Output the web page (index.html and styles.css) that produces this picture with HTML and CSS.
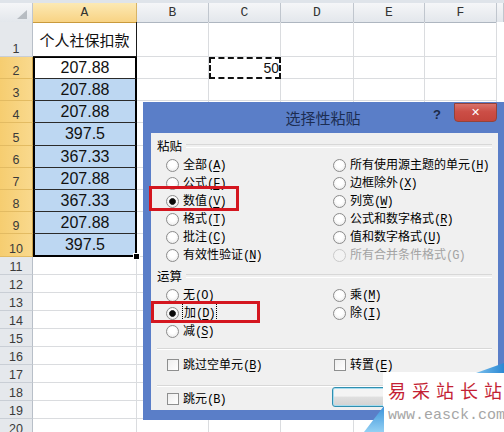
FILE: index.html
```html
<!DOCTYPE html>
<html lang="zh-CN">
<head>
<meta charset="utf-8">
<title>选择性粘贴</title>
<link rel="stylesheet" href="styles.css">
</head>
<body>
<div class="screen">
  <div class="sheet">
    <div class="topstrip"></div>
    <div class="row hdr">
      <div class="corner"><span class="tri"></span></div>
      <div class="ch sel">A</div>
      <div class="ch">B</div>
      <div class="ch">C</div>
      <div class="ch">D</div>
      <div class="ch">E</div>
      <div class="ch">F</div>
      <div class="ch"></div>
    </div>
    <div class="row h35">
      <div class="rh">1</div>
      <div class="a1">个人社保扣款</div>
      <div class="c"></div><div class="c"></div><div class="c"></div><div class="c"></div><div class="c"></div>
      <div class="e"></div>
    </div>
    <div class="row h22">
      <div class="rh sel">2</div>
      <div class="v first">207.88</div>
      <div class="c"></div>
      <div class="ants">50</div>
      <div class="c"></div><div class="c"></div><div class="c"></div>
      <div class="e"></div>
    </div>
    <div class="row h22">
      <div class="rh sel">3</div>
      <div class="v">207.88</div>
      <div class="c"></div><div class="c"></div><div class="c"></div><div class="c"></div><div class="c"></div>
      <div class="e"></div>
    </div>
    <div class="row h22">
      <div class="rh sel">4</div>
      <div class="v">207.88</div>
      <div class="c"></div><div class="c"></div><div class="c"></div><div class="c"></div><div class="c"></div>
      <div class="e"></div>
    </div>
    <div class="row h23">
      <div class="rh sel">5</div>
      <div class="v">397.5</div>
      <div class="c"></div><div class="c"></div><div class="c"></div><div class="c"></div><div class="c"></div>
      <div class="e"></div>
    </div>
    <div class="row h22">
      <div class="rh sel">6</div>
      <div class="v">367.33</div>
      <div class="c"></div><div class="c"></div><div class="c"></div><div class="c"></div><div class="c"></div>
      <div class="e"></div>
    </div>
    <div class="row h22">
      <div class="rh sel">7</div>
      <div class="v">207.88</div>
      <div class="c"></div><div class="c"></div><div class="c"></div><div class="c"></div><div class="c"></div>
      <div class="e"></div>
    </div>
    <div class="row h22">
      <div class="rh sel">8</div>
      <div class="v">367.33</div>
      <div class="c"></div><div class="c"></div><div class="c"></div><div class="c"></div><div class="c"></div>
      <div class="e"></div>
    </div>
    <div class="row h22">
      <div class="rh sel">9</div>
      <div class="v">207.88</div>
      <div class="c"></div><div class="c"></div><div class="c"></div><div class="c"></div><div class="c"></div>
      <div class="e"></div>
    </div>
    <div class="row h23">
      <div class="rh sel">10</div>
      <div class="v last">397.5<span class="handle"></span></div>
      <div class="c"></div><div class="c"></div><div class="c"></div><div class="c"></div><div class="c"></div>
      <div class="e"></div>
    </div>
    <div class="row h18"><div class="rh">11</div><div class="c"></div><div class="c"></div><div class="c"></div><div class="c"></div><div class="c"></div><div class="c"></div><div class="e"></div></div>
    <div class="row h18"><div class="rh">12</div><div class="c"></div><div class="c"></div><div class="c"></div><div class="c"></div><div class="c"></div><div class="c"></div><div class="e"></div></div>
    <div class="row h18"><div class="rh">13</div><div class="c"></div><div class="c"></div><div class="c"></div><div class="c"></div><div class="c"></div><div class="c"></div><div class="e"></div></div>
    <div class="row h18"><div class="rh">14</div><div class="c"></div><div class="c"></div><div class="c"></div><div class="c"></div><div class="c"></div><div class="c"></div><div class="e"></div></div>
    <div class="row h18"><div class="rh">15</div><div class="c"></div><div class="c"></div><div class="c"></div><div class="c"></div><div class="c"></div><div class="c"></div><div class="e"></div></div>
    <div class="row h18"><div class="rh">16</div><div class="c"></div><div class="c"></div><div class="c"></div><div class="c"></div><div class="c"></div><div class="c"></div><div class="e"></div></div>
    <div class="row h18"><div class="rh">17</div><div class="c"></div><div class="c"></div><div class="c"></div><div class="c"></div><div class="c"></div><div class="c"></div><div class="e"></div></div>
    <div class="row h18"><div class="rh">18</div><div class="c"></div><div class="c"></div><div class="c"></div><div class="c"></div><div class="c"></div><div class="c"></div><div class="e"></div></div>
    <div class="row h18"><div class="rh">19</div><div class="c"></div><div class="c"></div><div class="c"></div><div class="c"></div><div class="c"></div><div class="c"></div><div class="e"></div></div>
    <div class="row h18"><div class="rh">20</div><div class="c"></div><div class="c"></div><div class="c"></div><div class="c"></div><div class="c"></div><div class="c"></div><div class="e"></div></div>
  </div>

  <div class="dialog">
    <div class="titlebar">
      <div></div>
      <div class="dtitle">选择性粘贴</div>
      <div class="tbtns"><span class="help">?</span><span class="close">✕</span></div>
    </div>
    <div class="dbody">
      <div class="group"><span>粘贴</span></div>
      <div class="opts">
        <div class="opt"><span class="radio"></span><span>全部<span class="k">(<u>A</u>)</span></span></div>
        <div class="opt"><span class="radio"></span><span>所有使用源主题的单元<span class="k">(<u>H</u>)</span></span></div>
        <div class="opt"><span class="radio"></span><span>公式<span class="k">(<u>F</u>)</span></span></div>
        <div class="opt"><span class="radio"></span><span>边框除外<span class="k">(<u>X</u>)</span></span></div>
        <div class="opt"><span class="radio on"></span><span>数值<span class="k">(<u>V</u>)</span></span></div>
        <div class="opt"><span class="radio"></span><span>列宽<span class="k">(<u>W</u>)</span></span></div>
        <div class="opt"><span class="radio"></span><span>格式<span class="k">(<u>T</u>)</span></span></div>
        <div class="opt"><span class="radio"></span><span>公式和数字格式<span class="k">(<u>R</u>)</span></span></div>
        <div class="opt"><span class="radio"></span><span>批注<span class="k">(<u>C</u>)</span></span></div>
        <div class="opt"><span class="radio"></span><span>值和数字格式<span class="k">(<u>U</u>)</span></span></div>
        <div class="opt"><span class="radio"></span><span>有效性验证<span class="k">(<u>N</u>)</span></span></div>
        <div class="opt dis"><span class="radio off"></span><span>所有合并条件格式<span class="k">(G)</span></span></div>
      </div>
      <div class="group g2"><span>运算</span></div>
      <div class="opts">
        <div class="opt"><span class="radio"></span><span>无<span class="k">(<u>O</u>)</span></span></div>
        <div class="opt"><span class="radio"></span><span>乘<span class="k">(<u>M</u>)</span></span></div>
        <div class="opt"><span class="radio on"></span><span class="focus">加<span class="k">(<u>D</u>)</span></span></div>
        <div class="opt"><span class="radio"></span><span>除<span class="k">(<u>I</u>)</span></span></div>
        <div class="opt"><span class="radio"></span><span>减<span class="k">(<u>S</u>)</span></span></div>
        <div class="opt"></div>
      </div>
      <div class="sep"></div>
      <div class="opts checks">
        <div class="opt"><span class="check"></span><span>跳过空单元<span class="k">(<u>B</u>)</span></span></div>
        <div class="opt"><span class="check"></span><span>转置<span class="k">(<u>E</u>)</span></span></div>
      </div>
      <div class="sep sep2"></div>
      <div class="opts lastrow">
        <div class="opt"><span class="check"></span><span>跳元<span class="k">(B)</span></span></div>
        <div class="btnwrap"><span class="btn"></span></div>
      </div>
    </div>
  </div>

  <div class="mark mark1"></div>
  <div class="mark mark2"></div>

  <div class="wm">
    <div class="wm-paper">
      <div class="wm-cn">易采站长站</div>
      <div class="wm-url">www.easck.com</div>
    </div>
  </div>
</div>
</body>
</html>
```

FILE: styles.css
```css
* { box-sizing: border-box; margin: 0; padding: 0; }
html, body { width: 504px; height: 432px; overflow: hidden; background: #fff; }
body { font-family: "Noto Sans CJK SC", "Liberation Sans", sans-serif; text-autospace: no-autospace; }
.screen { position: relative; width: 504px; height: 432px; overflow: hidden; }

/* ---------- sheet ---------- */
.topstrip { height: 3px; background: #dfe4ea; }
.row { display: grid; grid-template-columns: 33px 104px 72px 72px 73px 71px 72px 7px; }
.hdr { height: 19px; }
.h35 { height: 35px; }
.h22 { height: 22px; }
.h23 { height: 23px; }
.h18 { height: 18px; }

.corner, .ch {
  background: linear-gradient(#f5f6f8, #e3e7ec);
  border-right: 1px solid #c0c6ce;
  border-bottom: 1px solid #aeb6c0;
}
.corner { display: flex; align-items: flex-end; justify-content: flex-end; padding: 0 5px 3px 0; }
.tri { width: 10px; height: 9px; background: #b7bcc2; clip-path: polygon(100% 0, 100% 100%, 0 100%); }
.ch {
  font-family: "Liberation Mono", monospace;
  font-size: 13px;
  color: #333;
  text-align: center;
  line-height: 19px;
}
.ch.sel { background: linear-gradient(#fce9b4, #f8d384); border-right-color: #d7b466; border-bottom-color: #c99a3c; }

.rh {
  background: #e5e8ec;
  border-right: 1px solid #b8bfc8;
  border-bottom: 1px solid #c9ced5;
  font-family: "Liberation Sans", sans-serif;
  font-size: 12.5px;
  line-height: 14px;
  color: #3a3a3a;
  display: flex;
  align-items: flex-end;
  justify-content: center;
}
.rh.sel { background: linear-gradient(90deg, #f6cd70, #f9d98d); border-right-color: #c9a04a; border-bottom-color: #e3bb62; }

.c { border-right: 1px solid #dadcdf; border-bottom: 1px solid #dadcdf; }
.e { background: #fff; }

.a1 {
  border-right: 1px solid #1a1a1a;
  border-bottom: 1px solid #1a1a1a;
  font-size: 15px;
  color: #111;
  display: flex;
  align-items: center;
  justify-content: center;
}
.v {
  background: #bdd7f2;
  border-left: 2px solid #000;
  border-right: 2px solid #000;
  border-bottom: 1px solid #2a2a2a;
  font-family: "Liberation Sans", sans-serif;
  font-size: 16px;
  color: #111;
  display: flex;
  align-items: center;
  justify-content: center;
}
.v.first { background: #fff; border-top: 1px solid #000; }
.v.last { border-bottom: 2px solid #000; position: relative; }
.handle {
  position: absolute;
  right: -5px;
  bottom: -5px;
  width: 7px;
  height: 7px;
  background: #000;
  border: 1px solid #fff;
  z-index: 1;
}
.ants {
  border: 2px dashed #111;
  font-family: "Liberation Sans", sans-serif;
  font-size: 14px;
  line-height: 18px;
  color: #111;
  text-align: right;
}

/* ---------- dialog ---------- */
.dialog {
  position: absolute;
  left: 143px;
  top: 102px;
  width: 361px;
  height: 318px;
  background: #5a7ec8;
  padding: 0 6px 10px 8px;
  display: flex;
  flex-direction: column;
}
.titlebar {
  height: 31px;
  flex: none;
  display: grid;
  grid-template-columns: 1fr auto 1fr;
  align-items: start;
}
.dtitle { font-size: 15px; line-height: 31px; color: #1c2d52; margin-left: -3px; }
.tbtns { display: flex; justify-content: flex-end; align-items: flex-start; gap: 13px; padding: 1px 1px 0 0; }
.help {
  font-family: "Liberation Sans", sans-serif;
  font-weight: bold;
  font-size: 13px;
  line-height: 13px;
  color: #1b2a48;
  margin-top: 5px;
}
.close {
  width: 43px;
  height: 19px;
  background: linear-gradient(#d9726a, #cc4e46 45%, #c4453c);
  border: 1px solid #93433a;
  border-radius: 0 0 4px 4px;
  color: #fff;
  font-family: "DejaVu Sans", sans-serif;
  font-size: 11px;
  font-weight: bold;
  display: flex;
  align-items: center;
  justify-content: center;
}
.dbody {
  flex: 1;
  background: #f0f0f0;
  overflow: hidden;
  padding: 5px 6px 0 6px;
  font-size: 12px;
  color: #000;
}
.group { display: flex; align-items: center; height: 16px; gap: 4px; }
.group span { line-height: 16px; font-size: 12.5px; }
.group::after { content: ""; flex: 1; height: 2px; border-top: 1px solid #d8d8d8; border-bottom: 1px solid #fff; }
.g2 { margin-top: 4px; }
.opts { display: grid; grid-template-columns: 167px 1fr; padding-left: 9px; margin-top: 2px; }
.opt { display: flex; align-items: center; height: 18px; line-height: 18px; white-space: nowrap; }
.k { font-family: "Liberation Mono", monospace; font-size: 12px; letter-spacing: -1px; }
.k u { text-decoration-thickness: 1px; text-underline-offset: 2px; }
.radio {
  flex: none;
  width: 13px;
  height: 13px;
  margin-right: 4px;
  border-radius: 50%;
  border: 1px solid #8c8c8c;
  background: radial-gradient(circle at 50% 40%, #fff 35%, #e4e4e4);
}
.radio.on {
  background: radial-gradient(circle, #0a0a0a 0 2.6px, #555 3.2px, transparent 3.7px),
              radial-gradient(circle at 50% 40%, #fff 35%, #e4e4e4);
}
.radio.off { border-color: #cacaca; background: #f3f3f3; }
.dis { color: #a3a3a3; }
.focus { outline: 1px dotted #000; outline-offset: 0; line-height: 15px; padding: 0 1px; }
.sep { height: 2px; margin-top: 8px; border-top: 1px solid #d8d8d8; border-bottom: 1px solid #fff; }
.checks { margin-top: 6px; }
.check {
  flex: none;
  width: 12px;
  height: 12px;
  margin-left: 1px;
  margin-right: 4px;
  border: 1px solid #8e8f8f;
  background: linear-gradient(135deg, #eeeeee, #ffffff);
}
.sep2 { margin-top: 11px; }
.lastrow { margin-top: 0; height: 20px; }
.lastrow .opt { margin-top: 3px; }
.btnwrap { margin-left: -1px; }
.btn {
  display: block;
  width: 76px;
  height: 20px;
  border: 1px solid #2f8fb0;
  border-radius: 3px;
  background: linear-gradient(#f4f4f4 45%, #e0e0e0 50%, #d2d2d2);
  box-shadow: inset 0 0 0 1px #a7dcef;
}

/* ---------- annotations ---------- */
.mark { position: absolute; border: 3px solid #d4161f; }
.mark1 { left: 149px; top: 186px; width: 90px; height: 25px; }
.mark2 { left: 151px; top: 301px; width: 109px; height: 22px; }

/* ---------- watermark ---------- */
.wm { position: absolute; left: 364px; top: 360px; width: 140px; height: 72px; }
.wm::before {
  content: "";
  position: absolute;
  right: 0;
  top: 3px;
  width: 28px;
  height: 10px;
  background: linear-gradient(90deg, #7cc0ec, #2a88d4);
  clip-path: polygon(0 100%, 100% 0, 100% 100%);
}
.wm::after {
  content: "";
  position: absolute;
  left: 0;
  bottom: 0;
  width: 20px;
  height: 26px;
  background: linear-gradient(#3a92da, #93d0f3);
  clip-path: polygon(0 100%, 100% 0, 100% 100%);
}
.wm-paper { margin: 12px 0 0 19px; height: 60px; background: #fff; padding: 7px 0 0 5px; overflow: hidden; white-space: nowrap; }
.wm-cn { font-size: 18px; line-height: 22px; letter-spacing: 6px; color: #c41f34; }
.wm-url { margin-top: 6px; font-family: "Liberation Mono", monospace; font-size: 15px; line-height: 18px; color: #a6a6a6; }
```
